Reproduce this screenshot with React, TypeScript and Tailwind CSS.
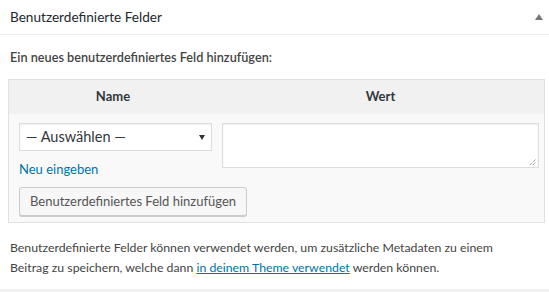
import React from "react";

export default function App() {
  return (
    <div className="w-[549px] h-[292px] bg-[#f1f1f1] overflow-hidden" style={{ fontFamily: 'Lato, "Open Sans", sans-serif' }}>
      <div className="bg-white h-[289px]">
        <div className="h-[35px] border-b border-[#eeeeee] flex items-center justify-between pl-[10px] pr-[5px]">
          <span className="text-[13.6px] text-[#23282d]">Benutzerdefinierte Felder</span>
          <svg width="8" height="6" viewBox="0 0 8 6" className="mr-[1px]">
            <polygon points="4,0 8,6 0,6" fill="#72777c" />
          </svg>
        </div>
        <div className="pt-[12px] px-[10px] text-[12.7px] text-[#444] leading-[20px] font-semibold">
          Ein neues benutzerdefiniertes Feld hinzufügen:
        </div>
        <div className="mt-[12px] ml-[8px] w-[537px] border border-[#e1e1e1] bg-[#f9f9f9]">
          <div className="flex h-[34px] bg-[#f1f1f1] text-[13px] font-bold text-[#32373c] items-center">
            <div className="w-[208px] text-center">Name</div>
            <div className="flex-1 text-center">Wert</div>
          </div>
          <div className="flex pt-[9px] pl-[10px] pr-[5px]">
            <div className="w-[193px]">
              <div className="h-[28px] bg-white border border-[#dddddd] shadow-[inset_0_1px_2px_rgba(0,0,0,0.07)] flex items-center justify-between pl-[6px] pr-[6px] text-[14.5px] text-[#32373c]">
                <span>— Auswählen —</span>
                <svg width="6" height="5" viewBox="0 0 6 5"><polygon points="0,0 6,0 3,5" fill="#333" /></svg>
              </div>
              <div className="mt-[8px] text-[13px] text-[#0073aa] leading-[20px]">Neu eingeben</div>
              <div className="mt-[8px] h-[29px] w-[228px] bg-[#f7f7f7] border border-[#cccccc] rounded-[3px] shadow-[0_1px_0_#cccccc] flex items-center justify-center text-[13px] text-[#555]">
                Benutzerdefiniertes Feld hinzufügen
              </div>
            </div>
            <div className="ml-[10px] w-[317px] h-[45px] bg-white border border-[#dddddd] shadow-[inset_0_1px_2px_rgba(0,0,0,0.07)] relative">
              <svg width="8" height="8" viewBox="0 0 8 8" className="absolute right-[1px] bottom-[1px]">
                <line x1="1" y1="7" x2="7" y2="1" stroke="#555" strokeWidth="0.8" strokeDasharray="1 1" />
                <line x1="4" y1="7" x2="7" y2="4" stroke="#555" strokeWidth="0.8" strokeDasharray="1 1" />
              </svg>
            </div>
          </div>
          <div className="h-[6px]" />
        </div>
        <div className="mt-[15px] px-[10px] text-[12.3px] text-[#444] leading-[20px]">
          Benutzerdefinierte Felder können verwendet werden, um zusätzliche Metadaten zu einem
          <br />
          Beitrag zu speichern, welche dann <a className="text-[#0073aa] underline">in deinem Theme verwendet</a> werden können.
        </div>
      </div>
    </div>
  );
}
